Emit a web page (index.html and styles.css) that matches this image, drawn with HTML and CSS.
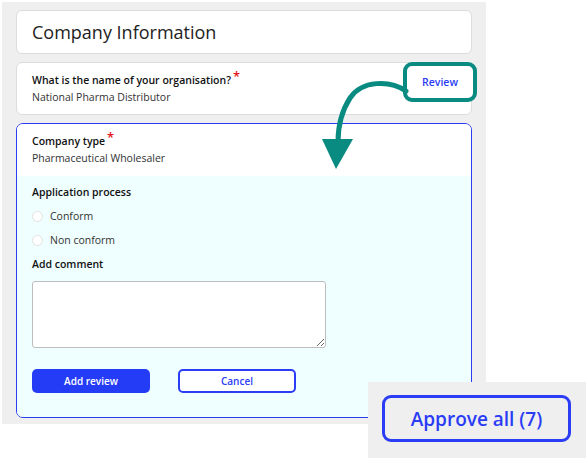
FILE: index.html
```html
<!DOCTYPE html>
<html>
<head>
<meta charset="utf-8">
<link rel="stylesheet" href="styles.css">
</head>
<body>
<div class="panel">
  <div class="card title-card">Company Information</div>
  <div class="card field-card">
    <div class="label">What is the name of your organisation?<span class="req">*</span></div>
    <div class="value">National Pharma Distributor</div>
  </div>
  <div class="card review-card">
    <div class="review-top">
      <div class="label">Company type<span class="req">*</span></div>
      <div class="value">Pharmaceutical Wholesaler</div>
    </div>
    <div class="review-body">
      <div class="label">Application process</div>
      <div class="radios">
        <label class="radio"><span class="dot"></span>Conform</label>
        <label class="radio"><span class="dot"></span>Non conform</label>
      </div>
      <div class="label comment-label">Add comment</div>
      <textarea class="comment"></textarea>
      <div class="actions">
        <button class="btn primary">Add review</button>
        <button class="btn secondary">Cancel</button>
      </div>
    </div>
  </div>
</div>

<div class="review-callout">Review</div>
<svg class="arrow" width="586" height="458" viewBox="0 0 586 458">
  <path d="M406 91 C390 80 362 80 350 98 C341 112 338 126 338 142" fill="none" stroke="#0a8b82" stroke-width="5" stroke-linecap="round"/>
  <polygon points="322,139 353,139 336,169" fill="#0a8b82"/>
</svg>

<div class="approve-area">
  <button class="approve">Approve all (7)</button>
</div>
</body>
</html>
```

FILE: styles.css
```css
* { box-sizing: border-box; }
html, body { margin: 0; padding: 0; background: #fff; }
body {
  width: 586px;
  height: 458px;
  position: relative;
  overflow: hidden;
  font-family: "Open Sans", "Noto Sans", sans-serif;
  color: #1d1d1d;
}
.panel {
  margin: 2px 0 0 2px;
  width: 484px;
  height: 422px;
  background: #efefef;
  padding: 8px 14px 6px 14px;
  display: flex;
  flex-direction: column;
  gap: 8px;
}
.card {
  background: #fff;
  border: 1px solid #dcdcdc;
  border-radius: 6px;
}
.title-card {
  height: 44px;
  padding: 0 15px;
  display: flex;
  align-items: center;
  font-size: 18px;
  color: #222;
}
.field-card {
  height: 53px;
  padding: 8px 15px 0;
}
.label {
  font-size: 10.5px;
  font-weight: 600;
  color: #111;
  line-height: 16px;
}
.req {
  color: #e3161b;
  font-size: 13px;
  margin-left: 2px;
  position: relative;
  top: -3px;
}
.value {
  font-size: 10.5px;
  color: #333;
  line-height: 16px;
  margin-top: 1px;
}
.review-card {
  flex: 1;
  border: 1px solid #2b3cf5;
  border-radius: 7px;
  overflow: hidden;
  display: flex;
  flex-direction: column;
}
.review-top {
  background: #fff;
  height: 52px;
  padding: 8px 15px 0;
}
.review-body {
  flex: 1;
  background: #effefe;
  padding: 8px 15px 0;
}
.radios {
  display: flex;
  flex-direction: column;
  gap: 8px;
  margin-top: 8px;
}
.radio {
  display: flex;
  align-items: center;
  font-size: 10.5px;
  color: #333;
  line-height: 16px;
}
.dot {
  width: 11px;
  height: 11px;
  border-radius: 50%;
  border: 1px solid #e2e2e2;
  background: #fff;
  margin-right: 7px;
}
.comment-label {
  margin-top: 8px;
}
.comment {
  display: block;
  width: 294px;
  height: 67px;
  margin-top: 9px;
  border: 1px solid #bdbdbd;
  border-radius: 3px;
  background: #fff;
  resize: both;
}
.actions {
  display: flex;
  gap: 28px;
  margin-top: 21px;
}
.btn {
  width: 118px;
  height: 24px;
  border-radius: 5px;
  font-family: inherit;
  font-size: 10px;
  font-weight: 600;
  cursor: pointer;
}
.primary {
  background: #253cf7;
  border: none;
  color: #fff;
}
.secondary {
  background: #fff;
  border: 2px solid #2b3cf5;
  color: #2b3cf5;
}
.review-callout {
  position: absolute;
  left: 403px;
  top: 62px;
  width: 74px;
  height: 40px;
  border: 4px solid #0a8b82;
  border-radius: 9px;
  background: #fff;
  display: flex;
  align-items: center;
  justify-content: center;
  font-size: 10.5px;
  font-weight: 600;
  color: #2b3cf5;
}
.arrow {
  position: absolute;
  left: 0;
  top: 0;
  pointer-events: none;
}
.approve-area {
  position: absolute;
  left: 368px;
  top: 382px;
  right: 0;
  bottom: 0;
  background: #efefef;
  padding: 13px 0 0 14px;
}
.approve {
  width: 189px;
  height: 47px;
  border: 3px solid #2b3cf5;
  border-radius: 9px;
  background: #efefef;
  color: #2b3cf5;
  font-family: inherit;
  font-size: 19px;
  font-weight: 600;
}
```
